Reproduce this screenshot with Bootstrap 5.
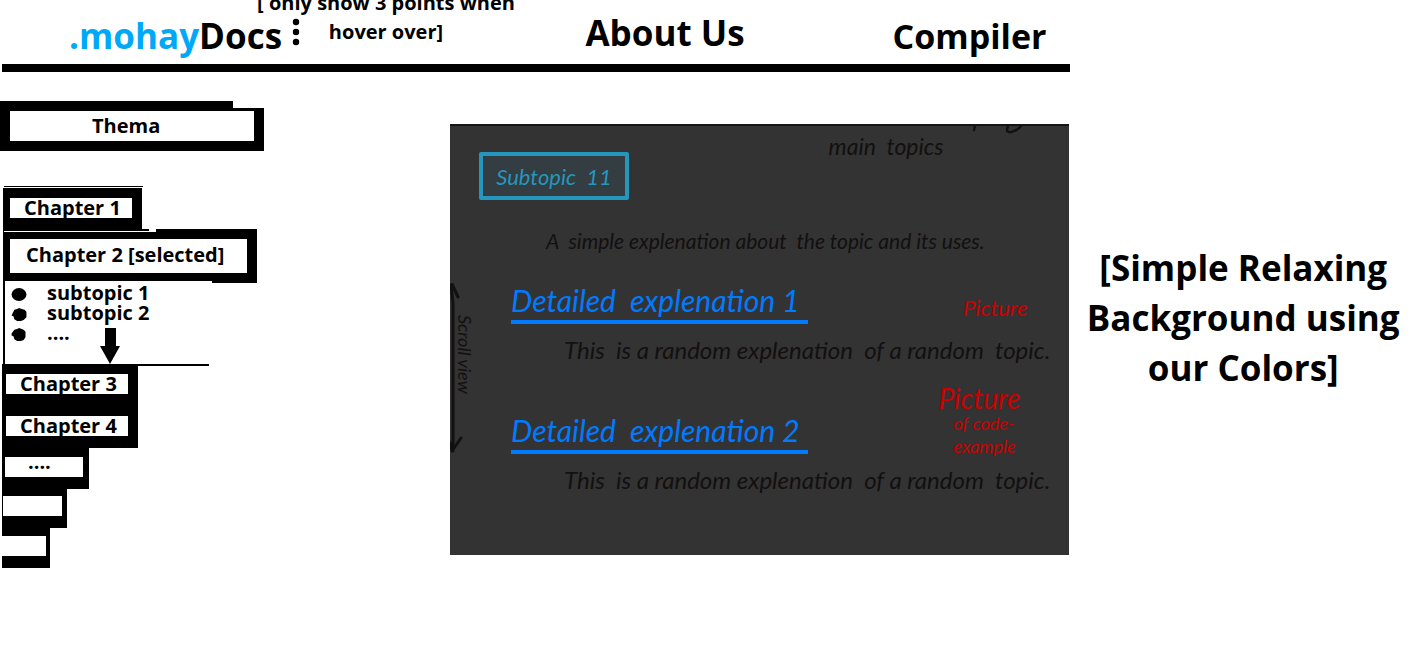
<!DOCTYPE html>
<html lang="en">
<head>
<meta charset="utf-8">
<meta name="viewport" content="width=device-width, initial-scale=1">
<title>.mohayDocs</title>
<link href="https://cdn.jsdelivr.net/npm/bootstrap@5.3.0/dist/css/bootstrap.min.css" rel="stylesheet">
<style>
  body { font-family: "Open Sans", "Noto Sans", sans-serif; font-weight: 700; color: #000; background: #fff; }
  a { color: inherit; text-decoration: none; }
  .page-main { flex: 0 0 75.6%; }
  .top-bar { height: 72px; margin-left: 2px; border-bottom: 8px solid #000; }
  .top-bar a { font-size: 35px; line-height: 48px; white-space: nowrap; }
  .brand { margin-left: 67px; margin-top: 12px; }
  .brand span { color: #00a8f8; }
  .dots-btn { margin-left: 10px; margin-top: 18px; width: 8px; }
  .hover-note { left: 248px; top: -12px; width: 272px; font-size: 20px; line-height: 29px; }
  .link-about { margin-left: auto; margin-top: 9px; }
  .top-bar .link-compiler { margin-left: 148px; margin-right: 24px; margin-top: 12px; font-size: 34px; }

  .side { flex: 0 0 450px; padding-top: 29px; }
  .box { display: block; background: #fff; color: #000; font-weight: 700; font-size: 20px; line-height: 24px; border: 0 solid #000; border-radius: 0; text-align: left; overflow: hidden; white-space: nowrap; }
  .theme-wrap { width: 264px; }
  .theme-box { width: 264px; height: 50px; border-width: 10px; padding: 0 0 0 82px; }
  .theme-notch { right: 0; top: 0; width: 31px; height: 7px; background: #fff; }
  .chapters { margin-top: 35px; margin-left: 2px; }
  .rule-top { width: 139px; height: 1px; margin-left: 2px; margin-bottom: 1px; background: #000; }
  .ch-one { width: 139px; height: 41px; margin-left: 1px; border-width: 10px 10px 11px 7px; padding: 0 0 0 14px; line-height: 20px; }
  .ch-two { width: 254px; height: 54px; margin-left: 1px; border-width: 10px 10px 10px 7px; padding: 0 0 2px 16px; }
  .seam { left: 2px; top: 0; width: 152px; height: 3px; background: #fff; }
  .seam-line { width: 145px; height: 2px; background: #000; }
  .seam-low { left: 3px; bottom: 0; width: 207px; height: 2px; background: #fff; }
  .topics { width: 206px; height: 81px; margin-left: 1px; border-left: 2px solid #000; font-size: 20px; line-height: 21px; }
  .topics a { margin-top: -1px; }
  .topics svg { width: 16px; height: 13px; margin: 5px 20px 0 6px; flex: none; }
  .rule-low { width: 207px; height: 2px; background: #000; }
  .topics .down-arrow { left: 95px; top: 45px; width: 20px; height: 36px; margin: 0; }
  .ch-small { width: 136px; border-width: 8px 10px 22px 4px; height: 50px; padding: 0 0 0 14px; line-height: 20px; }
  .ch-four { border-width: 0 10px 12px 4px; height: 32px; }
  .ch-dots { width: 87px; height: 41px; border-width: 9px 6px 12px 3px; padding: 0 0 10px 23px; line-height: 10px; }
  .ch-five { width: 65px; height: 39px; border-width: 7px 5px 12px 1px; }
  .ch-six { width: 48px; height: 40px; border-width: 8px 4px 12px 0; }

  .sketch { margin-top: 52px; margin-right: 1px; padding-bottom: 61px; background: #333; border-top: 2px solid #141414; color: #121010; font-family: Lato, "Open Sans", sans-serif; font-style: italic; font-weight: 400; }
  .gutter { flex: 0 0 28px; padding-top: 157px; }
  .gutter span { writing-mode: vertical-rl; font-size: 18px; line-height: 18px; margin-top: 32px; margin-left: -8px; }
  .sub-box { margin-left: 1px; margin-top: 26px; width: 150px; height: 48px; border: 4px solid #2596be; border-radius: 2px; background: #333d42; color: #2596be; font-size: 22px; }
  .main-topics { font-size: 23px; line-height: 28px; margin-top: 6px; margin-right: 126px; }
  .cut-line { right: 44px; top: 0; }
  .intro { margin: 28px 0 0 68px; font-size: 21px; line-height: 26px; white-space: nowrap; }
  .head-row { padding-left: 33px; margin-top: 30px; }
  .head-row + .detail { margin-top: 12px; }
  .head-two { margin-top: 20px; }
  .head-two + .detail { margin-top: 8px; }
  .head-row h2 { width: 297px; margin: 0; padding-bottom: 3px; color: #007bff; font-size: 30px; line-height: 33px; font-weight: 400; border-bottom: 4px solid #007bff; white-space: nowrap; }
  .pic { color: #cb0000; white-space: nowrap; }
  .pic-one { font-size: 22px; line-height: 32px; margin-right: 42px; }
  .pic-two { margin-right: 49px; font-size: 18px; line-height: 23px; }
  .pic-two b { font-weight: 400; font-size: 28px; line-height: 28px; display: block; margin-left: -10px; }
  .pic-two span { display: block; padding-left: 5px; }
  .detail { margin: 0 0 0 86px; font-size: 24px; line-height: 28px; white-space: nowrap; }

  .backdrop { padding-top: 243px; font-size: 35px; line-height: 50px; }
</style>
</head>
<body>
<div class="d-flex align-items-start">
  <div class="page-main">
    <header class="top-bar d-flex align-items-start position-relative">
      <a class="brand" href="#"><span>.mohay</span>Docs</a>
      <button class="dots-btn btn p-0 border-0 lh-1" type="button" aria-label="More">
        <svg class="d-block" width="8" height="28" viewBox="0 0 8 28"><circle cx="4" cy="4" r="3.2"/><circle cx="4" cy="14" r="3.2"/><circle cx="4" cy="24" r="3.2"/></svg>
      </button>
      <div class="hover-note position-absolute text-center">[ only show 3 points when<br>hover over]</div>
      <a class="link-about" href="#">About Us</a>
      <a class="link-compiler" href="#">Compiler</a>
    </header>

    <div class="d-flex align-items-start">
      <nav class="side">
        <div class="theme-wrap position-relative">
          <button type="button" class="box theme-box">Thema</button>
          <span class="theme-notch position-absolute"></span>
        </div>
        <div class="chapters">
          <div class="rule-top"></div>
          <button type="button" class="box ch-one">Chapter 1</button>
          <div class="position-relative">
            <button type="button" class="box ch-two">Chapter 2 [selected]</button>
            <span class="seam position-absolute"><span class="seam-line d-block"></span></span>
            <span class="seam-low position-absolute"></span>
          </div>
          <div class="topics position-relative">
            <div class="d-flex"><svg viewBox="0 0 16 14"><ellipse cx="8" cy="7" rx="8" ry="7"/></svg><a href="#">subtopic 1</a></div>
            <div class="d-flex"><svg viewBox="0 0 16 14"><path d="M1 6 3 2 6 1 8 0 11 1 14 2 16 4V10L13 13 10 14H6L3 12 2 9 0 8z"/></svg><a href="#">subtopic 2</a></div>
            <div class="d-flex"><svg viewBox="0 0 16 14"><path d="M0 6 3 2 6 1 8 0 11 1 13 2 15 4V10L13 13 10 14H6L3 12 2 9 0 8z"/></svg><a href="#">....</a></div>
            <svg class="down-arrow position-absolute" viewBox="0 0 20 36"><path d="M5 0H16V18H20L10 36 0 18H5z"/></svg>
          </div>
          <div class="rule-low"></div>
          <button type="button" class="box ch-small">Chapter 3</button>
          <button type="button" class="box ch-small ch-four">Chapter 4</button>
          <button type="button" class="box ch-dots">....</button>
          <button type="button" class="box ch-five" aria-label="Chapter 6"></button>
          <button type="button" class="box ch-six" aria-label="Chapter 7"></button>
        </div>
      </nav>

      <main class="sketch flex-grow-1 d-flex position-relative">
        <div class="gutter d-flex align-items-start">
          <svg class="flex-shrink-0" width="14" height="170" viewBox="0 0 14 170" fill="none" stroke="#121010" stroke-width="3" stroke-linecap="round"><path d="M1 2 3 20V168M2 1 8 14M2 168 11 155M2 167 0 160"/></svg>
          <span>Scroll view</span>
        </div>
        <div class="flex-grow-1">
          <div class="d-flex align-items-start justify-content-between">
            <div class="sub-box d-flex align-items-center justify-content-center">Subtopic&nbsp; 11</div>
            <div class="main-topics">main &nbsp;topics</div>
          </div>
          <svg class="cut-line position-absolute" width="54" height="10" viewBox="0 0 54 10" fill="none" stroke="#121010" stroke-width="2.5" stroke-linecap="round"><path d="M4 0 3 4M37 0C34 7 39 7 43 5Q48 3 50 0"/></svg>
          <p class="intro">A &nbsp;simple explenation about &nbsp;the topic and its uses.</p>
          <div class="head-row d-flex align-items-end justify-content-between">
            <h2>Detailed &nbsp;explenation 1</h2>
            <div class="pic pic-one">Picture</div>
          </div>
          <p class="detail">This &nbsp;is a random explenation &nbsp;of a random &nbsp;topic.</p>
          <div class="head-row head-two d-flex align-items-end justify-content-between">
            <h2 class="mb-1">Detailed &nbsp;explenation 2</h2>
            <div class="pic pic-two"><b>Picture</b><span>of code-<br>example</span></div>
          </div>
          <p class="detail">This &nbsp;is a random explenation &nbsp;of a random &nbsp;topic.</p>
        </div>
      </main>
    </div>
  </div>
  <aside class="backdrop flex-grow-1 text-center">[Simple Relaxing<br>Background using<br>our Colors]</aside>
</div>
<script src="https://cdn.jsdelivr.net/npm/bootstrap@5.3.0/dist/js/bootstrap.bundle.min.js"></script>
</body>
</html>
